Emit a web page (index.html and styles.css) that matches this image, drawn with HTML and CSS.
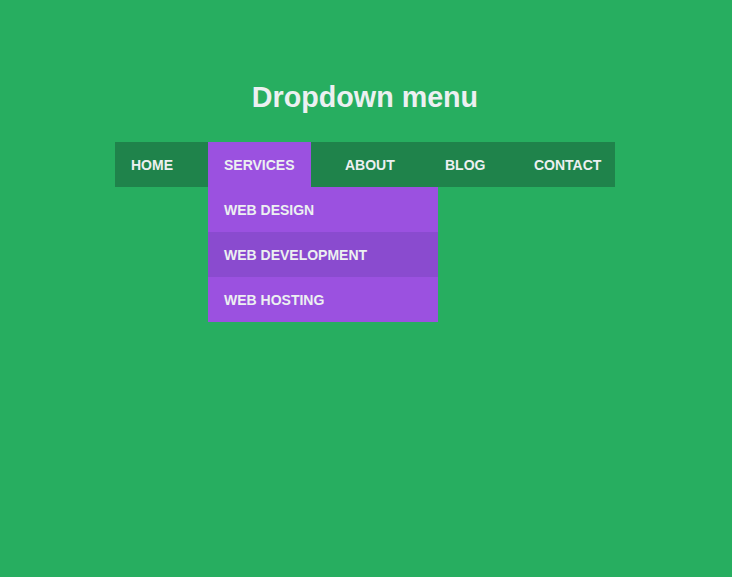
FILE: index.html
```html
<!DOCTYPE html>
<html>
<head>
<meta charset="utf-8">
<link rel="stylesheet" href="styles.css">
</head>
<body>
<div class="page">
  <h1 class="title">Dropdown menu</h1>
  <nav class="nav">
    <ul class="menu">
      <li class="item"><a class="link">HOME</a></li>
      <li class="item open"><a class="link">SERVICES</a>
        <ul class="sub">
          <li class="sub-item"><a class="sub-link">WEB DESIGN</a></li>
          <li class="sub-item hover"><a class="sub-link">WEB DEVELOPMENT</a></li>
          <li class="sub-item"><a class="sub-link">WEB HOSTING</a></li>
        </ul>
      </li>
      <li class="item"><a class="link">ABOUT</a></li>
      <li class="item"><a class="link">BLOG</a></li>
      <li class="item"><a class="link">CONTACT</a></li>
    </ul>
  </nav>
</div>
</body>
</html>
```
FILE: styles.css
```css
html, body {
  margin: 0;
  padding: 0;
  height: 100%;
}
body {
  background: #27ae60;
  font-family: "Liberation Sans", Arial, sans-serif;
  color: #ecf0f1;
}
.page {
  padding-top: 81px;
}
.title {
  margin: 0;
  font-size: 28.7px;
  font-weight: bold;
  text-align: center;
  line-height: 33px;
  color: #ecf0f1;
  padding-right: 2px;
}
.nav {
  width: 500px;
  margin: 28px 0 0 115px;
}
.menu {
  list-style: none;
  margin: 0;
  padding: 0;
  display: grid;
  grid-template-columns: 75px 103px 82px 71px 97px;
  column-gap: 18px;
  background: #1f834b;
}
.item {
  position: relative;
}
.link {
  display: block;
  padding: 2px 16px 0;
  height: 43px;
  line-height: 43px;
  font-size: 14px;
  font-weight: bold;
  white-space: nowrap;
  color: #ecf0f1;
}
.item.open > .link {
  background: #9b51e0;
}
.sub {
  position: absolute;
  top: 45px;
  left: 0;
  width: 230px;
  list-style: none;
  margin: 0;
  padding: 0;
  background: #9b51e0;
}
.sub-link {
  display: block;
  padding: 2px 16px 0;
  height: 43px;
  line-height: 43px;
  font-size: 14px;
  font-weight: bold;
  color: #ecf0f1;
}
.sub-item.hover {
  background: #8a4bcf;
}
```
